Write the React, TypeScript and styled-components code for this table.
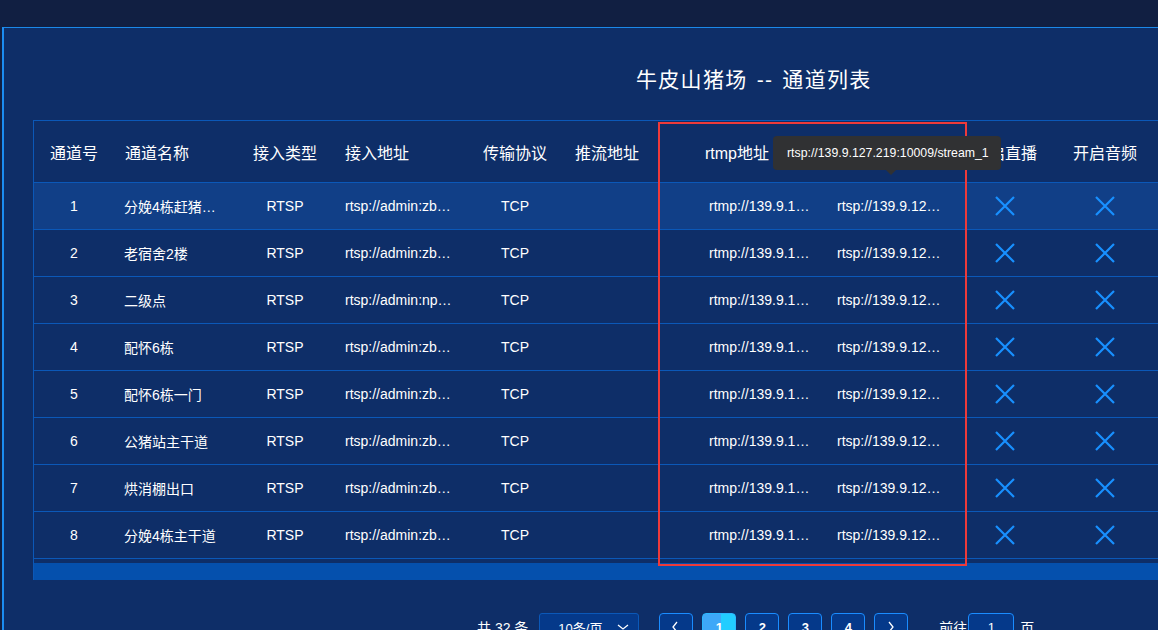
import React from "react";
import styled, { createGlobalStyle } from "styled-components";

const Global = createGlobalStyle`
  html, body { margin: 0; padding: 0; background: #111f42; overflow: hidden; }
  body { font-family: "Liberation Sans", "Noto Sans CJK SC", sans-serif; color: #fff; }
  * { box-sizing: border-box; }
`;

const Page = styled.div`
  width: 1158px;
  height: 630px;
  padding-top: 27px;
  padding-left: 2px;
  overflow: hidden;
`;

const Panel = styled.div`
  position: relative;
  width: 1300px;
  height: 640px;
  background: #0e2e68;
  border-left: 2px solid #1b8cf2;
  border-top: 1px solid #1b88e8;
`;

const Title = styled.div`
  padding-top: 38px;
  padding-left: 632px;
  height: 92px;
  font-size: 21px;
  line-height: 28px;
  letter-spacing: 1.3px;
  word-spacing: 2px;
  color: #fff;
`;

const TableWrap = styled.div`
  margin-left: 29px;
  width: 1240px;
  border-top: 1px solid #0b58b8;
  border-left: 1px solid #0b58b8;
`;

const cols = "80px 120px 102px 128px 102px 125px 130px 144px 80px 120px";

const HeadRow = styled.div`
  display: grid;
  grid-template-columns: ${cols};
  height: 62px;
  align-items: center;
  border-bottom: 1px solid #0b58b8;
  font-size: 16px;
`;

const Row = styled.div<{ $hover?: boolean }>`
  display: grid;
  grid-template-columns: ${cols};
  height: 47px;
  align-items: center;
  border-bottom: 1px solid #0b58b8;
  background: ${(p) => (p.$hover ? "#113f87" : "transparent")};
  font-size: 14px;
`;

const Cell = styled.div<{ $align?: "left" | "center"; $pad?: number }>`
  padding-left: ${(p) => p.$pad ?? 0}px;
  white-space: nowrap;
  overflow: hidden;
  display: flex;
  align-items: center;
  justify-content: ${(p) => (p.$align === "center" ? "center" : "flex-start")};
`;

const Trunc = styled.span<{ $max: number }>`
  display: inline-block;
  max-width: ${(p) => p.$max}px;
  overflow: hidden;
  text-overflow: ellipsis;
  white-space: nowrap;
`;

const ScrollGap = styled.div`
  height: 4px;
`;

const ScrollBar = styled.div`
  height: 17px;
  background: #0550ad;
`;

const Pager = styled.div`
  display: flex;
  align-items: center;
  margin-top: 33px;
  padding-left: 473px;
  font-size: 14px;
`;

const Total = styled.span`
  margin-right: 11px;
`;

const Select = styled.div`
  width: 100px;
  height: 28px;
  border: 1px solid #0b58b8;
  background: #05398a;
  border-radius: 3px;
  display: flex;
  align-items: center;
  justify-content: space-between;
  padding: 0 8px 0 18px;
  font-size: 13px;
  margin-right: 20px;
`;

const PageBtn = styled.div<{ $active?: boolean }>`
  width: 34px;
  height: 28px;
  border-radius: 4px;
  border: 1px solid ${(p) => (p.$active ? "#2bb8ff" : "#1a8cff")};
  background: ${(p) => (p.$active ? "linear-gradient(90deg, #3ea8f8 0 55%, #22cdff 55% 100%)" : "#05398a")};
  display: flex;
  align-items: center;
  justify-content: center;
  font-weight: bold;
  font-size: 13px;
  margin-right: 9px;
`;

const Goto = styled.span`
  margin-left: 22px;
  margin-right: 1px;
`;

const GotoInput = styled.div`
  width: 46px;
  height: 28px;
  border: 1px solid #1a8cff;
  border-radius: 4px;
  background: #05398a;
  display: flex;
  align-items: center;
  justify-content: center;
  font-size: 13px;
  margin-right: 6px;
`;

const RedBox = styled.div`
  position: absolute;
  left: 654px;
  top: 94px;
  width: 309px;
  height: 444px;
  border: 2px solid #ee3a3a;
  pointer-events: none;
`;

const Tooltip = styled.div`
  position: absolute;
  left: 769px;
  top: 108px;
  height: 34px;
  padding: 0 12px 0 14px;
  background: #303133;
  border-radius: 4px;
  font-size: 12.3px;
  line-height: 34px;
  color: #fff;
  white-space: nowrap;
  &::after {
    content: "";
    position: absolute;
    left: 112px;
    bottom: -5px;
    border-left: 6px solid transparent;
    border-right: 6px solid transparent;
    border-top: 6px solid #303133;
  }
`;

const XIcon = () => (
  <svg width="20" height="20" viewBox="0 0 20 20">
    <path d="M1 1 L19 19 M19 1 L1 19" stroke="#1890ff" strokeWidth="2.2" fill="none" />
  </svg>
);

const Chevron = ({ dir }: { dir: "left" | "right" | "down" }) => {
  const d = dir === "left" ? "M8 2 L4 7 L8 12" : dir === "right" ? "M5 2 L9 7 L5 12" : "M2 5 L7 9 L12 5";
  return (
    <svg width="14" height="14" viewBox="0 0 14 14">
      <path d={d} stroke="#fff" strokeWidth="1.3" fill="none" />
    </svg>
  );
};

const rows = [
  { id: 1, name: "分娩4栋赶猪通道", addr: "rtsp://admin:zbjk12345@192.168.1.64", hover: true },
  { id: 2, name: "老宿舍2楼", addr: "rtsp://admin:zbjk12345@192.168.1.65" },
  { id: 3, name: "二级点", addr: "rtsp://admin:np12345678@192.168.1.66" },
  { id: 4, name: "配怀6栋", addr: "rtsp://admin:zbjk12345@192.168.1.67" },
  { id: 5, name: "配怀6栋一门", addr: "rtsp://admin:zbjk12345@192.168.1.68" },
  { id: 6, name: "公猪站主干道", addr: "rtsp://admin:zbjk12345@192.168.1.69" },
  { id: 7, name: "烘消棚出口", addr: "rtsp://admin:zbjk12345@192.168.1.70" },
  { id: 8, name: "分娩4栋主干道", addr: "rtsp://admin:zbjk12345@192.168.1.71" },
];

export default function App() {
  return (
    <Page>
      <Global />
      <Panel>
        <Title>牛皮山猪场 -- 通道列表</Title>
        <TableWrap>
          <HeadRow>
            <Cell $align="center">通道号</Cell>
            <Cell $pad={11}>通道名称</Cell>
            <Cell $align="center">接入类型</Cell>
            <Cell $pad={9}>接入地址</Cell>
            <Cell $align="center">传输协议</Cell>
            <Cell $pad={9}>推流地址</Cell>
            <Cell $pad={14}>rtmp地址</Cell>
            <Cell $pad={16}>rtsp地址</Cell>
            <Cell $pad={8}>开启直播</Cell>
            <Cell $pad={28}>开启音频</Cell>
          </HeadRow>
          {rows.map((r) => (
            <Row key={r.id} $hover={r.hover}>
              <Cell $align="center">{r.id}</Cell>
              <Cell $pad={10}>
                <Trunc $max={94}>{r.name}</Trunc>
              </Cell>
              <Cell $align="center">RTSP</Cell>
              <Cell $pad={9}>
                <Trunc $max={108}>{r.addr}</Trunc>
              </Cell>
              <Cell $align="center">TCP</Cell>
              <Cell $pad={9}></Cell>
              <Cell $pad={18}>
                <Trunc $max={101}>{`rtmp://139.9.127.219:1935/live/stream_${r.id}`}</Trunc>
              </Cell>
              <Cell $pad={16}>
                <Trunc $max={106}>{`rtsp://139.9.127.219:10009/stream_${r.id}`}</Trunc>
              </Cell>
              <Cell $align="center">
                <XIcon />
              </Cell>
              <Cell $align="center">
                <XIcon />
              </Cell>
            </Row>
          ))}
          <ScrollGap />
          <ScrollBar />
        </TableWrap>
        <Pager>
          <Total>共 32 条</Total>
          <Select>
            <span>10条/页</span>
            <Chevron dir="down" />
          </Select>
          <PageBtn>
            <Chevron dir="left" />
          </PageBtn>
          <PageBtn $active>1</PageBtn>
          <PageBtn>2</PageBtn>
          <PageBtn>3</PageBtn>
          <PageBtn>4</PageBtn>
          <PageBtn>
            <Chevron dir="right" />
          </PageBtn>
          <Goto>前往</Goto>
          <GotoInput>1</GotoInput>
          <span>页</span>
        </Pager>
        <RedBox />
        <Tooltip>rtsp://139.9.127.219:10009/stream_1</Tooltip>
      </Panel>
    </Page>
  );
}
